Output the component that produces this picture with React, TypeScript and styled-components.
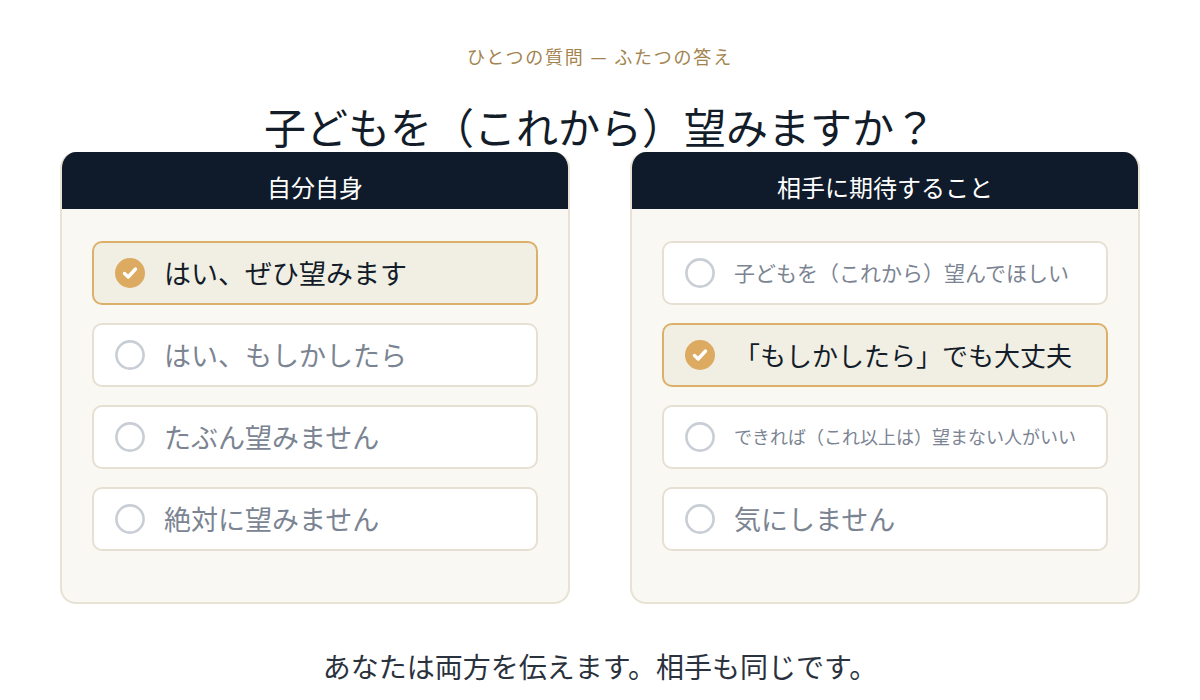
import styled, { createGlobalStyle } from "styled-components";

interface Choice {
    label: string
    size?: number
    selected?: boolean
}

interface PanelProps {
    title: string
    choices: Choice[]
}

const selfChoices: Choice[] = [
    { label: "はい、ぜひ望みます", selected: true },
    { label: "はい、もしかしたら" },
    { label: "たぶん望みません" },
    { label: "絶対に望みません" },
];

const partnerChoices: Choice[] = [
    { label: "子どもを（これから）望んでほしい", size: 21 },
    { label: "「もしかしたら」でも大丈夫", size: 26, selected: true },
    { label: "できれば（これ以上は）望まない人がいい", size: 18 },
    { label: "気にしません" },
];

function Mark({ selected }: { selected?: boolean }) {
    if (selected) {
        return (
            <StyledMark viewBox="0 0 30 30">
                <circle cx="15" cy="15" r="15" fill="#dcaa61" />
                <path d="M9.5 15.5 L13.2 19 L20.5 11" fill="none" stroke="#ffffff" strokeWidth="3.4" strokeLinecap="round" strokeLinejoin="round" />
            </StyledMark>
        );
    }
    return (
        <StyledMark viewBox="0 0 30 30">
            <circle cx="15" cy="15" r="13.6" fill="none" stroke="#c9ced6" strokeWidth="2.6" />
        </StyledMark>
    );
}

function Panel({ title, choices }: PanelProps) {
    return (
        <StyledPanel>
            <StyledPanelHeader>{title}</StyledPanelHeader>
            <StyledPanelBody>
                {choices.map((c) => (
                    <StyledOption key={c.label} $selected={c.selected}>
                        <Mark selected={c.selected} />
                        <StyledOptionLabel $selected={c.selected} $size={c.size ?? 27}>{c.label}</StyledOptionLabel>
                    </StyledOption>
                ))}
            </StyledPanelBody>
        </StyledPanel>
    );
}

export default function App() {
    return (
        <>
            <GlobalStyle />
            <StyledPage>
                <StyledEyebrow>ひとつの質問 — ふたつの答え</StyledEyebrow>
                <StyledTitle>子どもを（これから）望みますか？</StyledTitle>
                <StyledPanels>
                    <Panel title="自分自身" choices={selfChoices} />
                    <Panel title="相手に期待すること" choices={partnerChoices} />
                </StyledPanels>
                <StyledFooter>あなたは両方を伝えます。相手も同じです。</StyledFooter>
            </StyledPage>
        </>
    );
}

const GlobalStyle = createGlobalStyle`
    html, body {
        margin: 0;
        padding: 0;
        background: #ffffff;
    }
    body {
        font-family: "Noto Sans CJK JP", "Noto Sans", sans-serif;
    }
`;

const StyledPage = styled.div`
    width: 1200px;
    height: 700px;
    display: flex;
    flex-direction: column;
    align-items: center;
    padding-top: 43px;
    box-sizing: border-box;
`;

const StyledEyebrow = styled.div`
    font-size: 18px;
    line-height: 26px;
    letter-spacing: 0.1em;
    color: #a3844f;
`;

const StyledTitle = styled.h1`
    margin: 31px 0 0;
    font-size: 42px;
    line-height: 52px;
    font-weight: 400;
    color: #131c29;
`;

const StyledPanels = styled.div`
    display: grid;
    grid-template-columns: 510px 510px;
    gap: 60px;
`;

const StyledPanel = styled.div`
    display: flex;
    flex-direction: column;
    border-radius: 16px;
    overflow: hidden;
    border: 2px solid #e8e2d5;
    border-top: none;
    background: #faf8f3;
`;

const StyledPanelHeader = styled.div`
    height: 57px;
    box-sizing: border-box;
    padding-top: 21px;
    margin: 0 -2px;
    background: #0f1b2a;
    color: #ffffff;
    text-align: center;
    font-size: 24px;
    line-height: 28px;
`;

const StyledPanelBody = styled.div`
    display: flex;
    flex-direction: column;
    gap: 18px;
    padding: 32px 30px 51px;
`;

const StyledOption = styled.div<{ $selected?: boolean }>`
    height: 64px;
    box-sizing: border-box;
    display: flex;
    align-items: center;
    gap: 19px;
    padding-left: 21px;
    border-radius: 10px;
    border: 2px solid ${(p) => (p.$selected ? "#dcb06a" : "#e6e0d3")};
    background: ${(p) => (p.$selected ? "#f1eee3" : "#ffffff")};
`;

const StyledMark = styled.svg`
    width: 30px;
    height: 30px;
    flex-shrink: 0;
`;

const StyledOptionLabel = styled.span<{ $selected?: boolean; $size: number }>`
    font-size: ${(p) => p.$size}px;
    line-height: 1.2;
    white-space: nowrap;
    color: ${(p) => (p.$selected ? "#131c29" : "#7b8492")};
`;

const StyledFooter = styled.div`
    margin-top: 44px;
    font-size: 28px;
    line-height: 36px;
    color: #2a323e;
`;
